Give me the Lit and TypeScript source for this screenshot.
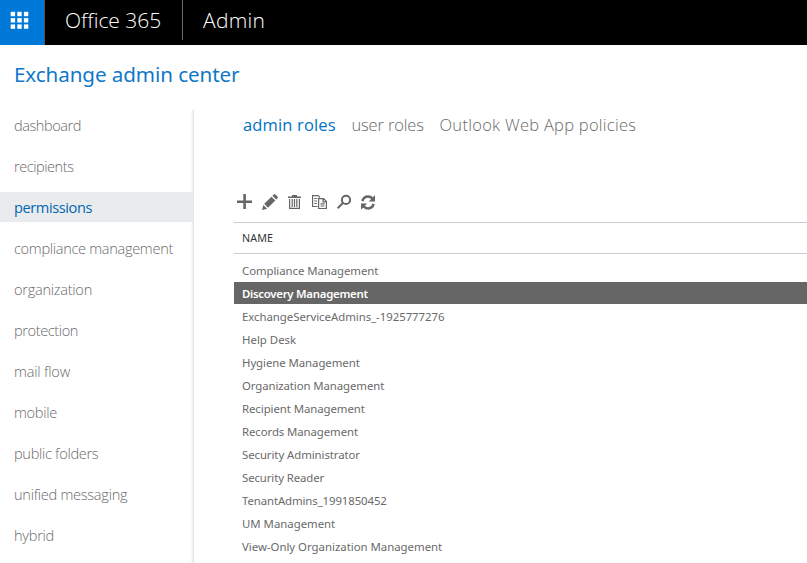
import { LitElement, html, css, svg } from "lit";
import { customElement, property } from "lit/decorators.js";
import { classMap } from "lit/directives/class-map.js";

type Label = [text: string, width: number];

/** A line of text whose tracking is adjusted so that it spans a given width. */
@customElement("text-run")
class TextRun extends LitElement {
  @property() text = "";
  @property({ type: Number }) width = 0;

  static styles = css`
    :host { display: inline-block; white-space: pre; }
    .run { display: inline-block; font-variant-ligatures: none; }
  `;

  updated() {
    const run = this.renderRoot.querySelector<HTMLElement>(".run");
    if (!run || !this.width) return;
    run.style.letterSpacing = "0px";
    const natural = run.getBoundingClientRect().width;
    run.style.letterSpacing = `${(this.width - natural) / this.text.length}px`;
  }

  render() {
    return html`<span class="run">${this.text}</span>`;
  }
}

const run = ([text, width]: Label) =>
  html`<text-run .text=${text} .width=${width}></text-run>`;

const NAV: Label[] = [
  ["dashboard", 67], ["recipients", 59.5], ["permissions", 78],
  ["compliance management", 159], ["organization", 78], ["protection", 64],
  ["mail flow", 56], ["mobile", 43], ["public folders", 84.3],
  ["unified messaging", 113.3], ["hybrid", 40],
];

const TABS: Label[] = [
  ["admin roles", 92.7], ["user roles", 72.4], ["Outlook Web App policies", 196.8],
];

const ROLES: Label[] = [
  ["Compliance Management", 136.3], ["Discovery Management", 125.8],
  ["ExchangeServiceAdmins_-1925777276", 202.5], ["Help Desk", 54.2],
  ["Hygiene Management", 117.7], ["Organization Management", 142.2],
  ["Recipient Management", 122.8], ["Records Management", 116],
  ["Security Administrator", 118], ["Security Reader", 82.2],
  ["TenantAdmins_1991850452", 144.7], ["UM Management", 93.2],
  ["View-Only Organization Management", 200.2],
];

const ICONS = [
  svg`<path d="M0 6.5h6.3V0h2.6v6.5H15v2.4H8.9V15H6.3V8.9H0z"/>`,
  svg`<path d="M0 16l1.4-5 3.7 3.7zM2.2 9.8l7.3-7.1 3.8 3.8-7.3 7.3zM10.4 1.8L11.8.4q.7-.7 1.5 0l2.3 2.3q.7.7 0 1.4l-1.4 1.5z"/>`,
  svg`<path d="M5 1h5v1.5h4V4H1V2.5h4z"/><path class="line" d="M2.6 5v9.4h9.8V5M5.2 5v8M7.5 5v8M9.8 5v8"/>`,
  svg`<path class="line" d="M5.5 12.5H.6V1.6H6L8 3.5M6.6 4.6h5l2.8 2.8v7.1H6.6zM11.1 4.6v3.2h3.3M2.3 4.5h3M2.3 7h2.6M2.3 9.5h2.6M8.5 9.8h4M8.5 12h4"/>`,
  svg`<circle class="thick" cx="10" cy="5.9" r="4.1"/><path class="thick" d="M7.1 8.8L1.7 14.2"/>`,
  svg`<path class="heavy" d="M2.4 7.1Q3.5 2.5 8 2.5q2.6 0 4.4 2M13.6 9.9Q12.5 14.4 8 14.4q-2.6 0-4.4-2"/><path d="M15 1v6.4H8.8zM1 15.8V9.5h6.2z"/>`,
];

@customElement("app-root")
class AppRoot extends LitElement {
  static styles = css`
    :host {
      display: flex; flex-direction: column; height: 563px; overflow: hidden;
      background: #fff; color: #6a6a6a;
      font-family: "Open Sans", "Noto Sans", sans-serif;
    }
    .bar { display: flex; height: 45px; background: #000; color: #fff; flex: none; }
    .tile {
      width: 44px; border-right: 1px solid #555; background: #0078d7;
      box-sizing: content-box; height: 45px;
    }
    .tile svg { display: block; margin: 11px 0 0 10px; fill: #fff; }
    .brand {
      height: 40px; line-height: 41px; padding-left: 20px; font-size: 21px; font-weight: 300;
    }
    .suite { width: 117px; border-right: 1px solid #6a6a6a; }
    .title {
      height: 65px; line-height: 59px; padding-left: 14px; flex: none; box-sizing: border-box;
      color: #0f78c8; font-size: 20.6px;
      font-family: "Noto Sans", sans-serif; font-weight: 400;
    }
    .body { display: flex; flex: 1; min-height: 0; }
    .nav {
      width: 194px; box-sizing: border-box; flex: none; display: flex; flex-direction: column; gap: 11px;
      background: linear-gradient(to left, #e3e3e3 0, #e8e8e8 1px, #f7f7f7 2px, #fff 4px);
    }
    .item {
      height: 30px; line-height: 30px; padding-left: 14px; font-size: 14.6px;
      font-weight: 300; margin-right: 1px;
    }
    .item.on { background: #eaebed; color: #0067b0; font-weight: 400; }
    .main { flex: 1; margin-left: 40px; min-width: 0; }
    .tabs {
      display: flex; gap: 15.7px; padding-left: 9px; height: 84px;
      line-height: 30px; font-size: 16.5px; font-weight: 300;
    }
    .tab.on { color: #0072c6; font-weight: 400; }
    .tools { display: flex; height: 28px; padding-left: 3px; gap: 9px; }
    .tools svg { width: 16px; height: 16px; fill: #666; }
    .tools svg:nth-child(n + 5) { margin-left: -1px; }
    .line, .thick, .heavy { fill: none; stroke: #666; stroke-width: 1.2; }
    .thick { stroke-width: 2; }
    .heavy { stroke-width: 2.5; }
    .head {
      height: 30px; line-height: 31px; padding-left: 8px; color: #333; font-size: 10.7px;
      font-family: "Noto Sans", sans-serif;
      border-top: 1px solid #c8cdd2; border-bottom: 1px solid #c8cdd2;
    }
    .list { padding-top: 5px; display: flex; flex-direction: column; gap: 1px; }
    .row {
      height: 22px; line-height: 23px; padding-left: 8px; font-size: 11.4px;
      font-family: "Noto Sans", sans-serif;
    }
    .row.on { background: #666; color: #fff; font-weight: 600; }
  `;

  render() {
    return html`
      <header class="bar">
        <div class="tile">
          <svg width="20" height="20">
            ${[0, 1, 2].map((r) => [0, 1, 2].map((c) =>
              svg`<rect x=${0.7 + c * 6.6} y=${0.8 + r * 6.3} width="4.4" height="4.4"/>`))}
          </svg>
        </div>
        <div class="brand suite">${run(["Office 365", 96.3])}</div>
        <div class="brand">${run(["Admin", 62.3])}</div>
      </header>
      <div class="title">${run(["Exchange admin center", 225.5])}</div>
      <div class="body">
        <nav class="nav">
          ${NAV.map((l, i) => html`<div class=${classMap({ item: true, on: i === 2 })}>${run(l)}</div>`)}
        </nav>
        <main class="main">
          <div class="tabs">
            ${TABS.map((l, i) => html`<div class=${classMap({ tab: true, on: i === 0 })}>${run(l)}</div>`)}
          </div>
          <div class="tools">
            ${ICONS.map((icon) => html`<svg viewBox="0 0 16 16">${icon}</svg>`)}
          </div>
          <div class="head">${run(["NAME", 31])}</div>
          <div class="list">
            ${ROLES.map((l, i) => html`<div class=${classMap({ row: true, on: i === 1 })}>${run(l)}</div>`)}
          </div>
        </main>
      </div>
    `;
  }
}
